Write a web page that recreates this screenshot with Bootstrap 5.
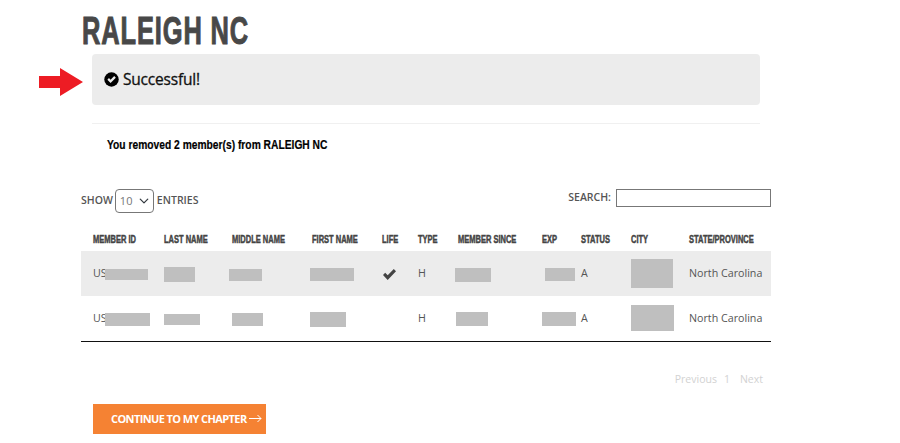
<!DOCTYPE html>
<html>
<head>
    <title>Raleigh NC</title>
    <link href="https://cdn.jsdelivr.net/npm/bootstrap@5.3.0/dist/css/bootstrap.min.css" rel="stylesheet">
    <style>
        body { font-family: "Open Sans", sans-serif; font-size: 11px; color: #555; background: #fff; }
        .page-wrap { width: 900px; height: 443px; overflow: hidden; padding: 0 0 0 39px; }
        .narrow { display: inline-block; font-family: "Liberation Sans", sans-serif; font-weight: 700; transform-origin: left center; white-space: nowrap; }
        .page-title { font-size: 38px; line-height: 40px; height: 54px; padding-top: 9px; margin: 0 0 0 43px; color: #484848; }
        .title-text { transform: scaleX(.67); letter-spacing: 1.3px; -webkit-text-stroke: 1px #484848; }
        .success-row { height: 51px; }
        .red-arrow { width: 44px; height: 28px; margin: 4px 9px 0 0; flex: none; }
        .success-box { width: 668px; height: 51px; background: #ececec; border: 0; border-radius: 4px; margin: 0; padding: 0 0 0 12px; font-size: 15.5px; color: #111; letter-spacing: -.2px; -webkit-text-stroke: .3px #111; }
        .removed-box { width: 668px; margin: 18px 0 0 53px; border-top: 1px solid #f0f0f0; padding: 11px 0 0 15px; font-size: 13.5px; line-height: 18px; color: #000; height: 65px; }
        .removed-text { transform: scaleX(.76); -webkit-text-stroke: .2px #000; }
        .table-wrap { width: 690px; margin-left: 42px; }
        .tools-row { height: 40px; padding-top: 1px; }
        .tool-label { font-size: 10.5px; font-weight: 600; color: #555; }
        .show-text { margin-top: 4px; }
        .search-text { margin-top: 1px; }
        .len-select { width: 39px; height: 24px; padding: 0 0 0 4px; font-size: 11px; color: #777; border-color: #777; border-radius: 4px; margin: 0 3px 0 2px; background-position: right 3px center; background-size: 12px 10px; }
        .search-input { width: 155px; height: 18px; min-height: 18px; border: 1px solid #777; border-radius: 0; margin-left: 5px; padding: 0 4px; }
        .member-table { table-layout: fixed; width: 690px; margin: 0; font-size: 10.7px; --bs-table-bg: transparent; }
        .member-table th { height: 22px; padding: 0 0 0 12px; font-size: 10px; line-height: 22px; color: #444; border: 0; white-space: nowrap; vertical-align: middle; }
        .head-text { transform: scaleX(.75); -webkit-text-stroke: .45px #444; }
        .member-table td { height: 45px; padding: 0 0 0 12px; border: 0; color: #555; vertical-align: middle; white-space: nowrap; overflow: visible; }
        .member-table tbody tr:first-child td { background: #ececec; }
        .member-table tbody tr:last-child td { border-bottom: 1px solid #111; }
        .c1 { width: 71px; } .c2 { width: 68px; } .c3 { width: 80px; } .c4 { width: 70px; }
        .c5 { width: 36px; } .c6 { width: 40px; } .c7 { width: 84px; } .c8 { width: 39px; }
        .c9 { width: 50px; } .c10 { width: 58px; } .c11 { width: 94px; }
        .hide-box { display: inline-block; background: #bfbfbf; vertical-align: middle; }
        .hide-id { width: 43px; height: 11px; margin-left: -2px; }
        .hide-id2 { width: 45px; height: 13px; margin-left: -2px; }
        .h31 { width: 31px; height: 15px; } .h33 { width: 33px; height: 12px; margin-left: -3px; }
        .h44 { width: 44px; height: 13px; margin-left: -2px; }
        .h36l { width: 36px; height: 11px; } .h31m { width: 31px; height: 13px; }
        .h36f { width: 36px; height: 15px; margin-left: -2px; }
        .h36s { width: 36px; height: 14px; margin-left: -3px; } .h32s { width: 32px; height: 14px; margin-left: -2px; }
        .h30e { width: 30px; height: 13px; margin-left: 3px; } .h34e { width: 34px; height: 14px; }
        .hc1 { width: 42px; height: 29px; } .hc2 { width: 43px; height: 26px; }
        .life-check { width: 13px; height: 11px; margin-left: 1px; }
        .pager-row { height: 55px; padding: 29px 8px 0 0; color: #d2d2d2; font-size: 10.5px; line-height: 16px; gap: 10px; }
        .pager-prev { margin-right: -3px; }
        .continue-btn { width: 173px; height: 30px; margin: 7px 0 0 12px; background: #f58233; border: 0; border-radius: 0; color: #fff; font-size: 11px; font-weight: 700; letter-spacing: -.6px; padding: 0 0 0 18px; line-height: 30px; white-space: nowrap; }
        .btn-arrow { width: 13px; height: 9px; margin-left: 2px; }
    </style>
</head>
<body>
    <div class="page-wrap">
        <h1 class="page-title"><span class="narrow title-text">RALEIGH NC</span></h1>

        <!-- Success message -->
        <div class="success-row d-flex align-items-center">
            <svg class="red-arrow" viewBox="0 0 44 28"><path d="M0 8H21V0L44 14 21 28V20H0Z" fill="#ed1c24"/></svg>
            <div class="alert success-box d-flex align-items-center gap-1">
                <svg width="15" height="15" viewBox="0 0 16 16"><circle cx="8" cy="8" r="7.7" fill="#000"/><path d="M3.6 8.2 7 11.6 12.6 6 10.9 4.3 7 8.2 5.3 6.5Z" fill="#ececec"/></svg>
                <span>Successful!</span>
            </div>
        </div>
        <div class="removed-box"><span class="narrow removed-text">You removed 2 member(s) from RALEIGH NC</span></div>

        <!-- Members table -->
        <div class="table-wrap">
            <div class="tools-row d-flex justify-content-between">
                <div class="tool-label d-flex align-items-start">
                    <span class="show-text">SHOW</span>
                    <select class="form-select len-select"><option>10</option></select>
                    <span class="show-text">ENTRIES</span>
                </div>
                <div class="tool-label d-flex align-items-start">
                    <span class="search-text">SEARCH:</span>
                    <input class="form-control search-input" type="text">
                </div>
            </div>
            <table class="table member-table">
                <colgroup>
                    <col class="c1"><col class="c2"><col class="c3"><col class="c4"><col class="c5"><col class="c6">
                    <col class="c7"><col class="c8"><col class="c9"><col class="c10"><col class="c11">
                </colgroup>
                <thead>
                    <tr>
                        <th><span class="narrow head-text">MEMBER ID</span></th>
                        <th><span class="narrow head-text">LAST NAME</span></th>
                        <th><span class="narrow head-text">MIDDLE NAME</span></th>
                        <th><span class="narrow head-text">FIRST NAME</span></th>
                        <th><span class="narrow head-text">LIFE</span></th>
                        <th><span class="narrow head-text">TYPE</span></th>
                        <th><span class="narrow head-text">MEMBER SINCE</span></th>
                        <th><span class="narrow head-text">EXP</span></th>
                        <th><span class="narrow head-text">STATUS</span></th>
                        <th><span class="narrow head-text">CITY</span></th>
                        <th><span class="narrow head-text">STATE/PROVINCE</span></th>
                    </tr>
                </thead>
                <tbody>
                    <tr>
                        <td>US<span class="hide-box hide-id"></span></td>
                        <td><span class="hide-box h31"></span></td>
                        <td><span class="hide-box h33"></span></td>
                        <td><span class="hide-box h44"></span></td>
                        <td><svg class="life-check" viewBox="0 0 13 11"><path d="M0 6 2.2 3.8 4.7 6.3 10.8 0 13 2.2 4.7 11Z" fill="#444"/></svg></td>
                        <td>H</td>
                        <td><span class="hide-box h36s"></span></td>
                        <td><span class="hide-box h30e"></span></td>
                        <td>A</td>
                        <td><span class="hide-box hc1"></span></td>
                        <td>North Carolina</td>
                    </tr>
                    <tr>
                        <td>US<span class="hide-box hide-id2"></span></td>
                        <td><span class="hide-box h36l"></span></td>
                        <td><span class="hide-box h31m"></span></td>
                        <td><span class="hide-box h36f"></span></td>
                        <td></td>
                        <td>H</td>
                        <td><span class="hide-box h32s"></span></td>
                        <td><span class="hide-box h34e"></span></td>
                        <td>A</td>
                        <td><span class="hide-box hc2"></span></td>
                        <td>North Carolina</td>
                    </tr>
                </tbody>
            </table>
            <div class="pager-row d-flex justify-content-end">
                <span class="pager-prev">Previous</span><span>1</span><span>Next</span>
            </div>
            <button class="btn continue-btn d-flex align-items-center">CONTINUE TO MY CHAPTER<svg class="btn-arrow" viewBox="0 0 13 9"><path d="M0 4.5H12M8.5 1 12 4.5 8.5 8" fill="none" stroke="#fff" stroke-width="1"/></svg></button>
        </div>
    </div>
    <script src="https://cdn.jsdelivr.net/npm/bootstrap@5.3.0/dist/js/bootstrap.bundle.min.js"></script>
</body>
</html>
